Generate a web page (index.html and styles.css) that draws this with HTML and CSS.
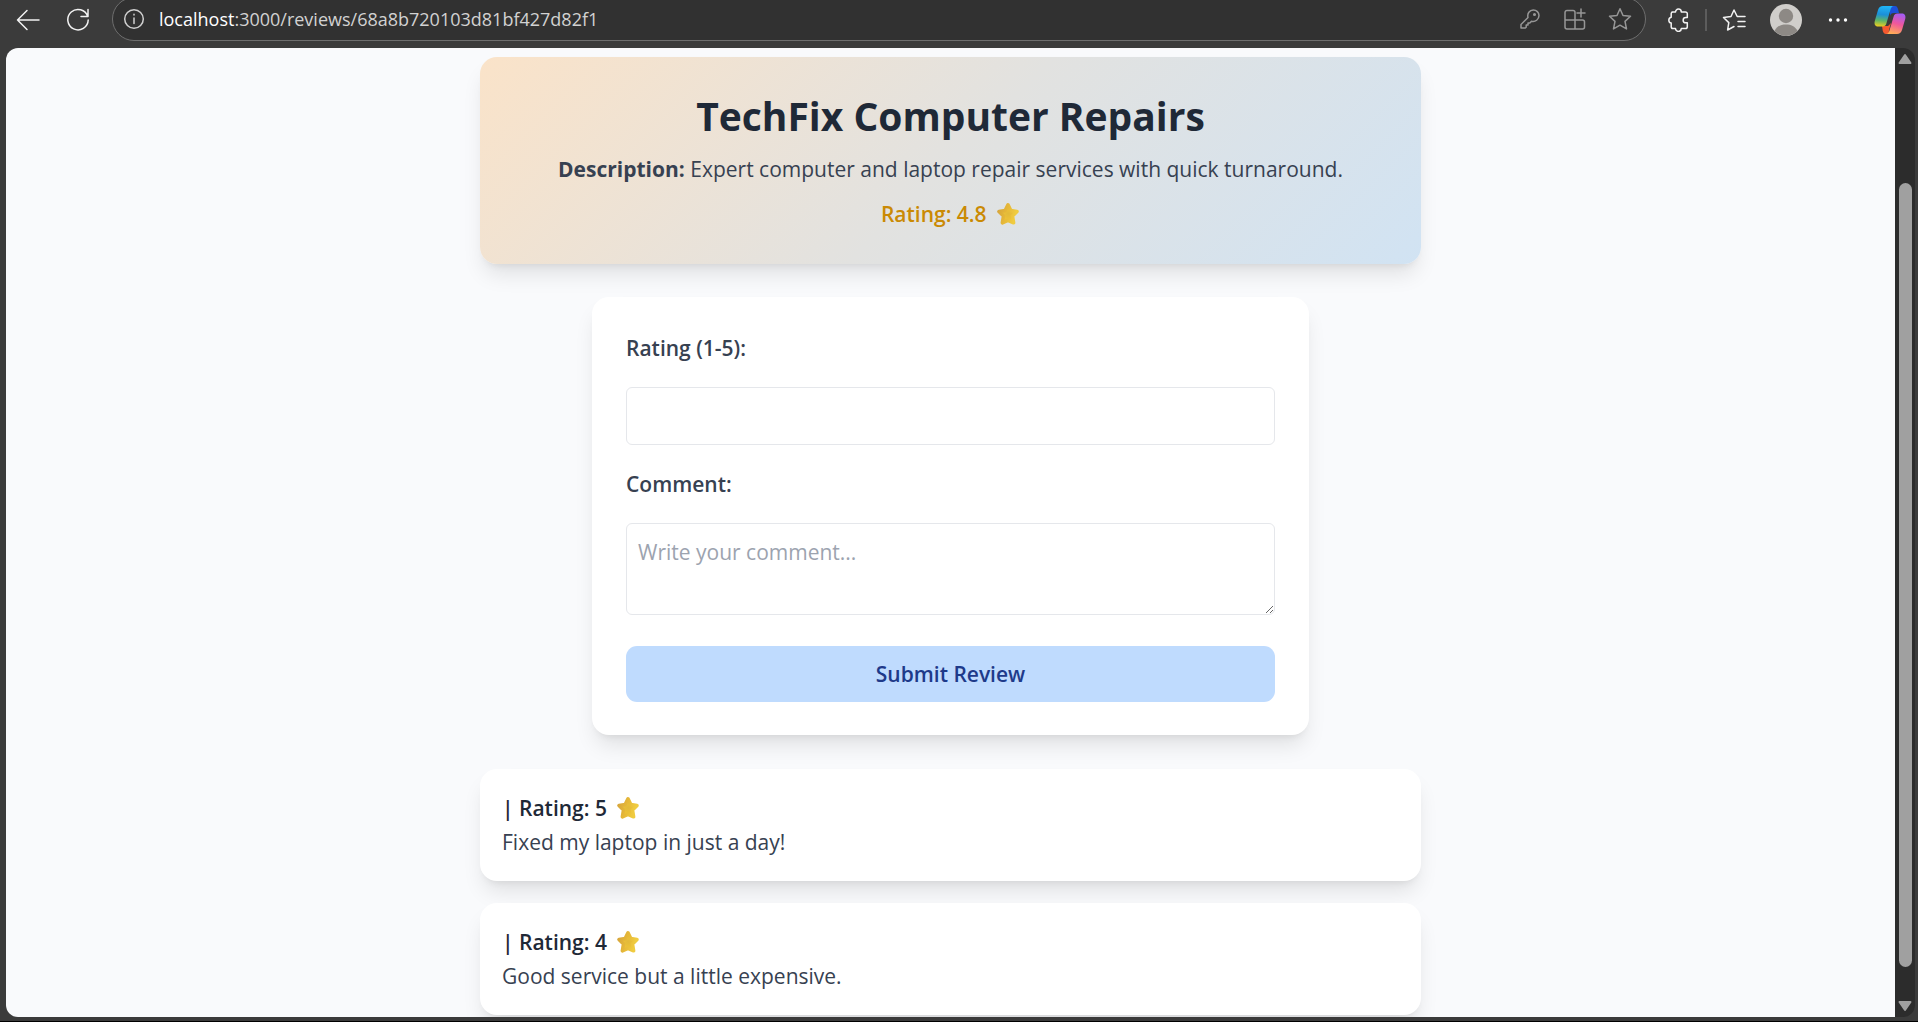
FILE: index.html
```html
<!DOCTYPE html>
<html lang="en">
<head>
<meta charset="utf-8">
<title>TechFix Computer Repairs</title>
<link rel="stylesheet" href="styles.css">
</head>
<body>
<svg width="0" height="0" class="defs" aria-hidden="true">
  <defs>
    <radialGradient id="gold" cx="0.5" cy="0.5" r="0.55">
      <stop offset="0" stop-color="#e2b93b"/>
      <stop offset="0.6" stop-color="#edc236"/>
      <stop offset="1" stop-color="#f0c93a"/>
    </radialGradient>
    <linearGradient id="rim" x1="0" y1="0" x2="1" y2="0.3">
      <stop offset="0" stop-color="#d6a53c"/>
      <stop offset="0.5" stop-color="#e6b838"/>
      <stop offset="1" stop-color="#f0cc40"/>
    </linearGradient>
    <linearGradient id="cpBlue" x1="0.3" y1="0" x2="0.2" y2="1">
      <stop offset="0" stop-color="#20b4f5"/>
      <stop offset="0.4" stop-color="#1b8fd8"/>
      <stop offset="0.7" stop-color="#5fb565"/>
      <stop offset="1" stop-color="#f2cf1d"/>
    </linearGradient>
    <linearGradient id="cpPink" x1="0.7" y1="0" x2="0.4" y2="1">
      <stop offset="0" stop-color="#a55cf5"/>
      <stop offset="0.5" stop-color="#f0579b"/>
      <stop offset="1" stop-color="#ffac57"/>
    </linearGradient>
    <symbol id="star" viewBox="0 0 24 24">
      <path d="M12 2.800 14.800 8.600 21 9.500 16.500 14 17.600 20.800 12 18.400 6.400 20.800 7.500 14 3 9.500 9.200 8.600Z" fill="url(#gold)" stroke="url(#rim)" stroke-width="3.600" stroke-linejoin="round"/>
    </symbol>
  </defs>
</svg>

<header class="toolbar">
  <button class="tool" type="button" aria-label="Back">
    <svg width="24" height="24" viewBox="0 0 24 24"><path d="M23 12H1.500M11 2.500 1.500 12 11 21.500"/></svg>
  </button>
  <button class="tool" type="button" aria-label="Refresh">
    <svg width="24" height="24" viewBox="0 0 24 24"><path d="M21.700 8.500A10.200 10.200 0 1 0 22.200 12M22 1.500V8.500H15"/></svg>
  </button>
  <div class="address">
    <svg class="info" width="22" height="22" viewBox="0 0 22 22"><circle cx="11" cy="11" r="9.300"/><path d="M11 10V15.500M11 6.300V7"/></svg>
    <span class="url"><span class="host">localhost</span>:3000/reviews/68a8b720103d81bf427d82f1</span>
    <button class="tool small" type="button" aria-label="Passwords">
      <svg width="22" height="22" viewBox="0 0 22 22"><path d="M9 9.500C8 5.500 10.500 2 14.300 2c3.200 0 5.700 2.400 5.700 5.600 0 4-3.700 6.500-7.500 5.600L10.800 15H9v2H7.200v2.200L6.300 20H2v-3.500Z"/><circle cx="15.500" cy="6.500" r="0.800"/></svg>
    </button>
    <button class="tool small" type="button" aria-label="Apps">
      <svg width="24" height="24" viewBox="0 0 24 24"><path d="M12 22V5.500A2 2 0 0 0 10 3.500H4A2 2 0 0 0 2 5.500V20A2 2 0 0 0 4 22H19.500A2 2 0 0 0 21.500 20V15A2 2 0 0 0 19.500 13H2M18 2V10M14 6H22"/></svg>
    </button>
    <button class="tool small" type="button" aria-label="Add to favorites">
      <svg width="24" height="24" viewBox="0 0 24 24"><path d="M12 1.800 15 8.500 22.500 9.300 17 14.400 18.500 21.900 12 18.200 5.500 21.900 7 14.400 1.500 9.300 9 8.500Z"/></svg>
    </button>
  </div>
  <div class="actions">
    <button class="tool" type="button" aria-label="Extensions">
      <svg width="24" height="24" viewBox="0 0 24 24"><path d="M6 4H9.500A2.900 2.900 0 0 1 15.300 4H19.500A1.800 1.800 0 0 1 21.300 5.800V9.500H19.800A2.600 2.600 0 0 0 19.800 14.800H21.300V18.700A1.800 1.800 0 0 1 19.500 20.500H15.300A2.900 2.900 0 0 1 9.500 20.500H7A1.800 1.800 0 0 1 5.200 18.700V15A2.900 2.900 0 0 1 5.200 9.300V5.800A1.800 1.800 0 0 1 7 4"/></svg>
    </button>
    <span class="divider"></span>
    <button class="tool" type="button" aria-label="Favorites">
      <svg width="24" height="24" viewBox="0 0 24 24"><path d="M12 18.500 5.600 22 6.800 14.600 1.500 9.500 9 8.500 12 2 15.200 8.500H23M16 13.500H23M16 18.500H23"/></svg>
    </button>
    <button class="tool" type="button" aria-label="Profile">
      <svg class="avatar" width="32" height="32" viewBox="0 0 32 32"><circle cx="16" cy="16" r="16" fill="#d0cecb"/><circle cx="16" cy="12" r="7.200" fill="#8d8985"/><path d="M4.500 27C7 22 11 20.500 16 20.500S25 22 27.500 27A16 16 0 0 1 4.500 27Z" fill="#8d8985"/></svg>
    </button>
    <button class="tool" type="button" aria-label="Settings and more">
      <svg class="solid" width="20" height="20" viewBox="0 0 20 20"><circle cx="2.500" cy="10" r="1.700"/><circle cx="10" cy="10" r="1.700"/><circle cx="17.500" cy="10" r="1.700"/></svg>
    </button>
    <button class="tool" type="button" aria-label="Copilot">
      <svg class="avatar" width="32" height="32" viewBox="0 0 32 32">
        <path d="M16 2H21C23 2 23.500 3.500 24 5L25 9H20C17.500 9 16.500 10 16 12Z" fill="#1c50d8"/>
        <path d="M8 22H14L17 19 15 26C14.600 28 15 29.500 16 30H12C10 30 9.300 28.500 8.800 27Z" fill="#f4592f"/>
        <path d="M9 2H20C18 2 17.200 3.500 16.700 5L12.500 19C12 21 11 22.500 8.500 22.500H4C1 22.500 0 20 .8 17L4 6C4.800 3.500 6.500 2 9 2Z" fill="url(#cpBlue)"/>
        <path d="M23 30H12C14 30 14.800 28.500 15.300 27L19.500 13C20 11 21 9.500 23.500 9.500H28C31 9.500 32 12 31.200 15L28 26C27.200 28.500 25.500 30 23 30Z" fill="url(#cpPink)"/>
      </svg>
    </button>
  </div>
</header>

<div class="window">
  <main class="page">
    <section class="banner">
      <h1>TechFix Computer Repairs</h1>
      <p><strong>Description:</strong> Expert computer and laptop repair services with quick turnaround.</p>
      <p class="score">Rating: 4.8 <svg class="star" role="img" aria-label="star"><use href="#star"/></svg></p>
    </section>

    <form class="review-form">
      <label for="rating">Rating (1-5):</label>
      <input id="rating" type="number" min="1" max="5">
      <label for="comment">Comment:</label>
      <textarea id="comment" rows="2" placeholder="Write your comment..."></textarea>
      <button class="submit" type="submit">Submit Review</button>
    </form>

    <section class="reviews">
      <article class="review">
        <p class="review-title">| Rating: 5 <svg class="star" role="img" aria-label="star"><use href="#star"/></svg></p>
        <p>Fixed my laptop in just a day!</p>
      </article>
      <article class="review">
        <p class="review-title">| Rating: 4 <svg class="star" role="img" aria-label="star"><use href="#star"/></svg></p>
        <p>Good service but a little expensive.</p>
      </article>
    </section>
  </main>
  <div class="scrollbar" aria-hidden="true">
    <svg width="14" height="12" viewBox="0 0 14 12"><path d="M7 2 12.500 10H1.500Z"/></svg>
    <div class="track"><div class="thumb"></div></div>
    <svg width="14" height="12" viewBox="0 0 14 12"><path d="M7 10 12.500 2H1.500Z"/></svg>
  </div>
</div>
</body>
</html>
```
FILE: styles.css
```css
* {
  box-sizing: border-box;
}

body {
  margin: 0;
  height: 100vh;
  display: flex;
  flex-direction: column;
  overflow: hidden;
  background: #3b3b3b;
  border-bottom: 1px solid #000;
  font-family: "Open Sans", "Noto Sans", sans-serif;
  font-size: 21px;
  line-height: 34px;
  color: #374151;
}

h1,
p {
  margin: 0;
}

button,
input,
textarea {
  font: inherit;
  color: inherit;
}

.defs {
  position: absolute;
}

/* Browser toolbar */
.toolbar {
  display: flex;
  flex: none;
  height: 48px;
  padding: 0 3px;
}

.tool {
  display: flex;
  align-items: center;
  justify-content: center;
  width: 50px;
  height: 40px;
  padding: 0;
  border: 0;
  background: none;
}

.tool svg,
.info {
  fill: none;
  stroke: #f2f2f2;
  stroke-width: 1.5;
  stroke-linejoin: round;
  stroke-linecap: round;
}

.tool .avatar {
  stroke: none;
}

.tool .solid {
  fill: #fff;
  stroke: none;
}

.address {
  flex: 1;
  display: flex;
  align-items: center;
  height: 44px;
  margin: -3px 7px 0 9px;
  padding: 0 3px 0 10px;
  border: 1px solid #6e6e6e;
  border-radius: 22px;
  background: #313131;
}

.info {
  stroke: #d0d0d0;
}

.url {
  flex: 1;
  margin-left: 14px;
  font-size: 18px;
  color: #d2d2d2;
}

.host {
  color: #fff;
}

.small {
  width: 45px;
}

.small svg {
  stroke: #979797;
}

.actions {
  display: flex;
  gap: 2px;
}

.divider {
  width: 2px;
  height: 22px;
  margin-top: 9px;
  background: #5c5c5c;
}

/* Page viewport */
.window {
  flex: 1;
  display: flex;
  min-height: 0;
  margin: 0 3px 4px 6px;
  border-radius: 12px;
  overflow: hidden;
  background: #2c2c2c;
}

.page {
  flex: 1;
  display: flex;
  flex-direction: column;
  align-items: center;
  overflow: hidden;
  padding: 9px 22px;
  background: #f9fafc;
}

.banner,
.review-form,
.review {
  flex: none;
  border-radius: 17px;
  background: #fff;
  box-shadow: 0 14px 21px -4px rgba(0, 0, 0, 0.1), 0 6px 8px -6px rgba(0, 0, 0, 0.1);
}

.banner {
  width: 100%;
  max-width: 941px;
  padding: 34px 34px 33px;
  text-align: center;
  background: linear-gradient(135deg, #fae3c9, #e2e2e0 50%, #d1e3f3);
}

h1 {
  margin-bottom: 11px;
  font-size: 39px;
  line-height: 50px;
  color: #1f2937;
}

.score {
  margin-top: 11px;
  font-weight: 600;
  color: #ca8a04;
}

.star {
  width: 24px;
  height: 24px;
  margin-left: 4px;
  vertical-align: -4px;
}

.review-form {
  display: flex;
  flex-direction: column;
  gap: 22px;
  width: 100%;
  max-width: 717px;
  margin-top: 33px;
  padding: 34px 34px 33px;
}

.review-form label {
  font-weight: 600;
}

.review-form input,
.review-form textarea {
  display: block;
  width: 100%;
  margin: 0;
  padding: 11px;
  border: 1px solid #e5e7eb;
  border-radius: 6px;
  background: #fff;
}

.review-form textarea {
  margin-bottom: 9px;
}

.review-form textarea::placeholder {
  color: #9ca3af;
}

.submit {
  padding: 11px;
  border: 0;
  border-radius: 11px;
  background: #bfdbfe;
  font-weight: 600;
  color: #1e3a8a;
}

.reviews {
  display: flex;
  flex-direction: column;
  gap: 22px;
  width: 100%;
  max-width: 941px;
  margin-top: 34px;
}

.review {
  padding: 22px;
}

.review-title {
  font-weight: 600;
  color: #1f2937;
}

/* Scrollbar */
.scrollbar {
  display: flex;
  flex-direction: column;
  align-items: center;
  gap: 6px;
  width: 20px;
  padding: 5px 0;
}

.scrollbar svg {
  fill: #a0a0a0;
  stroke: #a0a0a0;
  stroke-width: 2;
  stroke-linejoin: round;
}

.track {
  flex: 1;
  display: flex;
  width: 13px;
  padding: 112px 0 27px;
}

.thumb {
  flex: 1;
  border-radius: 7px;
  background: #a0a0a0;
}
```
